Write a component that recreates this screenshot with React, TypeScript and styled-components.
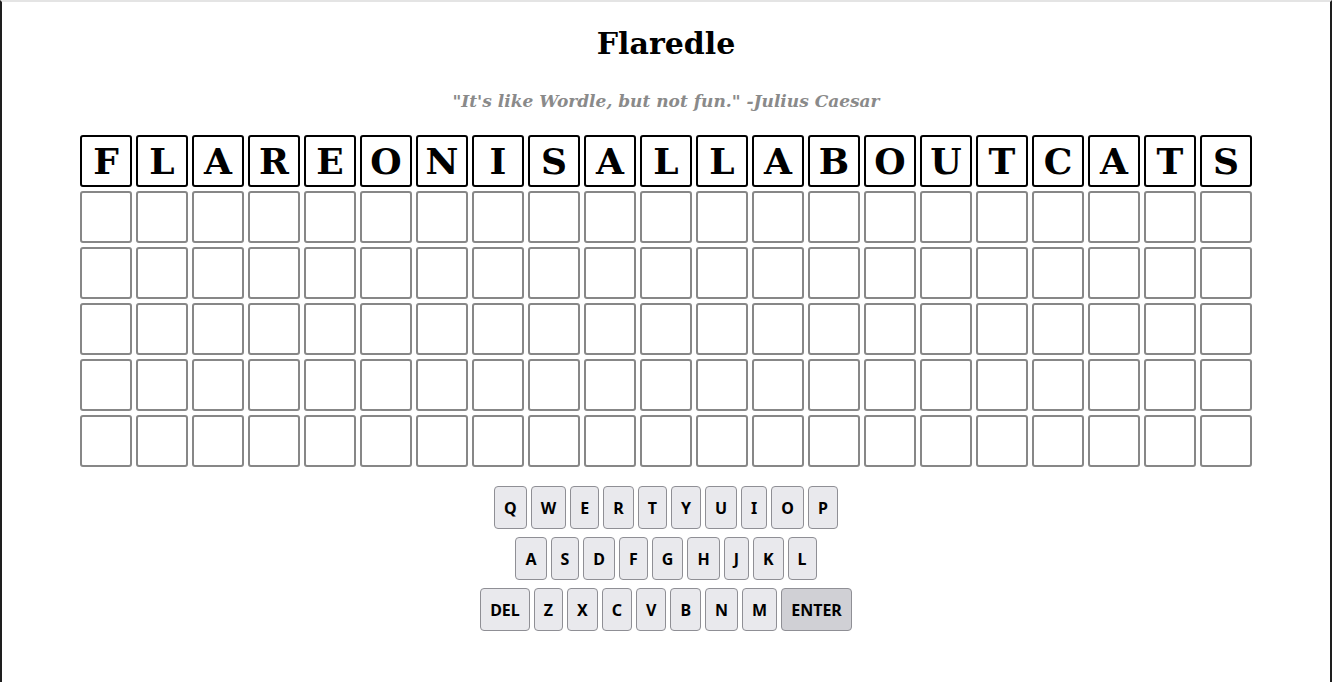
import styled, { createGlobalStyle } from 'styled-components';

const GlobalStyle = createGlobalStyle`
  html, body {
    margin: 0;
    padding: 0;
    background: #fff;
  }
`;

const Frame = styled.div`
  box-sizing: border-box;
  height: 682px;
  border-top: 2px solid #e4e4e4;
  border-left: 2px solid #1e1e1e;
  border-right: 2px solid #1e1e1e;
  display: flex;
  flex-direction: column;
  align-items: center;
  font-family: "DejaVu Serif", serif;
`;

const Title = styled.h1`
  margin: 22px 0 0;
  font-size: 30px;
  font-weight: bold;
  line-height: 40px;
  color: #000;
`;

const Quote = styled.p`
  margin: 26px 0 0;
  font-size: 17px;
  font-style: italic;
  font-weight: bold;
  line-height: 22px;
  color: #8a8a8a;
`;

const Board = styled.div`
  margin-top: 23px;
  display: grid;
  grid-template-columns: repeat(21, 52px);
  grid-auto-rows: 52px;
  gap: 4px;
`;

const Tile = styled.div<{ $filled: boolean }>`
  box-sizing: border-box;
  border: 2px solid ${(p) => (p.$filled ? '#000' : '#878787')};
  border-radius: 3px;
  display: flex;
  align-items: center;
  justify-content: center;
  font-size: 36px;
  font-weight: bold;
  color: #000;
`;

const Keyboard = styled.div`
  margin-top: 19px;
  display: flex;
  flex-direction: column;
  align-items: center;
  gap: 8px;
`;

const KeyRow = styled.div`
  display: flex;
  gap: 4px;
`;

const Key = styled.button<{ $active?: boolean }>`
  box-sizing: border-box;
  height: 43px;
  padding: 0 9px;
  border: 1px solid #8f8f95;
  border-radius: 4px;
  background: ${(p) => (p.$active ? '#d0d0d5' : '#e9e9ed')};
  font-family: "Noto Sans", sans-serif;
  font-size: 16px;
  font-weight: bold;
  color: #000;
  cursor: pointer;
`;

const word = 'FLAREONISALLABOUTCATS';
const rows = ['QWERTYUIOP', 'ASDFGHJKL'];
const bottom = ['DEL', 'Z', 'X', 'C', 'V', 'B', 'N', 'M', 'ENTER'];

export default function App() {
  const tiles: JSX.Element[] = [];
  for (let r = 0; r < 6; r++) {
    for (let c = 0; c < 21; c++) {
      const ch = r === 0 ? word[c] : '';
      tiles.push(
        <Tile key={`${r}-${c}`} $filled={r === 0}>
          {ch}
        </Tile>
      );
    }
  }

  return (
    <>
      <GlobalStyle />
      <Frame>
        <Title>Flaredle</Title>
        <Quote>"It's like Wordle, but not fun." -Julius Caesar</Quote>
        <Board>{tiles}</Board>
        <Keyboard>
          {rows.map((row) => (
            <KeyRow key={row}>
              {row.split('').map((k) => (
                <Key key={k}>{k}</Key>
              ))}
            </KeyRow>
          ))}
          <KeyRow>
            {bottom.map((k) => (
              <Key key={k} $active={k === 'ENTER'}>
                {k}
              </Key>
            ))}
          </KeyRow>
        </Keyboard>
      </Frame>
    </>
  );
}
